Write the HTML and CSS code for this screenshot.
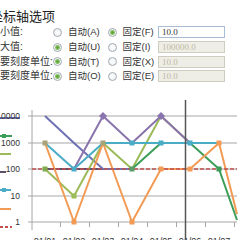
FILE: index.html
```html
<!DOCTYPE html>
<html lang="zh">
<head>
    <meta charset="UTF-8">
    <title>坐标轴选项</title>
    <link rel="stylesheet" href="styles.css">
</head>
<body>

    <div class="panel">
        <h1 class="title">坐标轴选项</h1>

        <div class="rows">
            <span class="lbl">最小值:</span>
            <span class="opt"><span class="radio"></span>自动(A)</span>
            <span class="opt"><span class="radio on"></span>固定(F)</span>
            <span class="field">10.0</span>

            <span class="lbl">最大值:</span>
            <span class="opt"><span class="radio on"></span>自动(U)</span>
            <span class="opt"><span class="radio"></span>固定(I)</span>
            <span class="field off">100000.0</span>

            <span class="lbl">主要刻度单位:</span>
            <span class="opt"><span class="radio on"></span>自动(T)</span>
            <span class="opt"><span class="radio"></span>固定(X)</span>
            <span class="field off">10.0</span>

            <span class="lbl">次要刻度单位:</span>
            <span class="opt"><span class="radio on"></span>自动(O)</span>
            <span class="opt"><span class="radio"></span>固定(E)</span>
            <span class="field off">10.0</span>
        </div>
    </div>

    <svg class="chart" width="251" height="150" viewBox="0 90 251 150">
        <!-- legend, cut off at the left edge -->
        <g class="legend">
            <line x1="0" y1="118" x2="20" y2="118" stroke="#6f72b3"/>
            <line x1="0" y1="136" x2="12" y2="136" stroke="#3b9e58"/>
            <rect x="2" y="134" width="4" height="4" fill="#3b9e58"/>
            <line x1="0" y1="154" x2="11" y2="154" stroke="#9bbb59"/>
            <line x1="0" y1="172" x2="6" y2="172" stroke="#5d4f6e"/>
            <line x1="0" y1="190" x2="11" y2="190" stroke="#4bacc6"/>
            <rect x="2" y="188" width="4" height="4" fill="#4bacc6"/>
            <line x1="0" y1="209" x2="11" y2="209" stroke="#f39b55"/>
            <line x1="0" y1="227" x2="12" y2="227" stroke="#c0504d" stroke-dasharray="3 2"/>
        </g>

        <!-- grid -->
        <g class="grid">
            <line x1="28" y1="116" x2="237" y2="116"/>
            <line x1="28" y1="143" x2="237" y2="143"/>
            <line x1="28" y1="169" x2="237" y2="169"/>
            <line x1="28" y1="196" x2="237" y2="196"/>
            <line x1="28" y1="222" x2="237" y2="222"/>
            <line x1="32" y1="110" x2="32" y2="230"/>
            <line x1="60.5" y1="222" x2="60.5" y2="227"/>
            <line x1="89.5" y1="222" x2="89.5" y2="227"/>
            <line x1="118.5" y1="222" x2="118.5" y2="227"/>
            <line x1="147.5" y1="222" x2="147.5" y2="227"/>
            <line x1="176.5" y1="222" x2="176.5" y2="227"/>
            <line x1="205.5" y1="222" x2="205.5" y2="227"/>
            <line x1="234.5" y1="222" x2="234.5" y2="227"/>
        </g>

        <g class="ylabels">
            <text x="20" y="119">10000</text>
            <text x="20" y="146">1000</text>
            <text x="20" y="172">100</text>
            <text x="20" y="199">10</text>
            <text x="20" y="225">1</text>
        </g>

        <g class="xlabels">
            <text x="45" y="244">01/01</text>
            <text x="74" y="244">01/02</text>
            <text x="103" y="244">01/03</text>
            <text x="132" y="244">01/04</text>
            <text x="161" y="244">01/05</text>
            <text x="190" y="244">01/06</text>
            <text x="219" y="244">01/07</text>
        </g>

        <!-- series -->
        <g class="series">
            <polyline stroke="#5d4f6e" points="45,169 74,169 103,169 132,169"/>
            <polyline stroke="#6f72b3" points="45,116 74,143 103,169 132,169"/>
            <polyline stroke="#9bbb59" points="45,169 74,196 103,143 132,169 161,116 190,143"/>
            <polyline stroke="#8a74ad" points="74,169 103,116 132,143 161,116 190,143"/>
            <polyline stroke="#3b9e58" points="132,169 161,143 190,143 219,169 237,220"/>
            <polyline stroke="#4bacc6" points="45,143 74,169 103,143 132,143 161,143 190,143 219,143"/>
            <polyline stroke="#f39b55" points="45,143 74,222 103,143 132,222 161,169 190,169 219,143 237,214"/>
            <line class="dash" x1="32" y1="169" x2="237" y2="169"/>
        </g>

        <g class="marks">
            <rect x="42.5" y="140.5" width="5" height="5" fill="#a8a27a"/>
            <rect x="42.5" y="166.5" width="5" height="5" fill="#7fab4d"/>
            <rect x="71.5" y="166.5" width="5" height="5" fill="#4bacc6"/>
            <rect x="71.5" y="193.5" width="5" height="5" fill="#9bbb59"/>
            <rect x="71.5" y="219.5" width="5" height="5" fill="#f39b55"/>
            <rect x="100.5" y="140.5" width="5" height="5" fill="#a8a27a"/>
            <rect x="129.5" y="140.5" width="5" height="5" fill="#4bacc6"/>
            <rect x="129.5" y="166.5" width="5" height="5" fill="#5b9e6a"/>
            <rect x="129.5" y="219.5" width="5" height="5" fill="#f39b55"/>
            <rect x="158.5" y="140.5" width="5" height="5" fill="#4bacc6"/>
            <rect x="158.5" y="166.5" width="5" height="5" fill="#f39b55"/>
            <rect x="187.5" y="140.5" width="5" height="5" fill="#4bacc6"/>
            <rect x="187.5" y="166.5" width="5" height="5" fill="#f39b55"/>
            <rect x="216.5" y="140.5" width="5" height="5" fill="#f39b55"/>
            <rect x="216.5" y="166.5" width="5" height="5" fill="#3b9e58"/>
            <polygon points="103,112 107,116 103,120 99,116" fill="#8a74ad"/>
            <polygon points="161,112 165,116 161,120 157,116" fill="#8a74ad"/>
        </g>

        <line class="cursor" x1="185.5" y1="100" x2="185.5" y2="240"/>
    </svg>

</body>
</html>
```

FILE: styles.css
```css
body {
    margin: 0;
    width: 251px;
    height: 240px;
    overflow: hidden;
    background: #fff;
    color: #333;
    font-family: "Liberation Sans", "Noto Sans CJK SC", sans-serif;
    text-autospace: no-autospace;
}

.panel {
    margin-left: -10px;
    height: 90px;
}

.title {
    margin: 0;
    padding-top: 9px;
    font-size: 13px;
    line-height: 15px;
    font-weight: normal;
    color: #222;
}

.rows {
    display: grid;
    grid-template-columns: 63px 54.5px 50.5px 67px;
    grid-auto-rows: 14.7px;
    align-items: center;
    margin-top: 1px;
    font-size: 10px;
    line-height: 12px;
}

.lbl {
    white-space: nowrap;
}

.opt {
    display: flex;
    align-items: center;
    gap: 6px;
    white-space: nowrap;
    font-size: 9.5px;
}

.radio {
    flex-shrink: 0;
    width: 9px;
    height: 9px;
    box-sizing: border-box;
    border: 1px solid #a3abb4;
    border-radius: 50%;
    background: radial-gradient(circle, #fff 0, #e9ebee 100%);
}

.radio.on {
    background: radial-gradient(circle, #4f9d2f 0, #8cc06a 2px, #f4f6f2 3px);
}

.field {
    height: 12px;
    box-sizing: border-box;
    border: 1px solid #a9bed6;
    background: #fff;
    padding-left: 3px;
    font-family: "Liberation Serif", serif;
    font-size: 9px;
    line-height: 10px;
    color: #333;
}

.field.off {
    background: #efeee6;
    border-color: #cfcdbf;
    color: #bdb9a4;
}

.chart {
    display: block;
}

.legend line {
    stroke-width: 2;
}

.grid line {
    stroke: #a6a6a6;
    stroke-width: 1;
}

.ylabels text {
    font-family: "Liberation Sans", sans-serif;
    font-size: 8.5px;
    fill: #333;
    text-anchor: end;
}

.xlabels text {
    font-family: "Liberation Sans", sans-serif;
    font-size: 9px;
    fill: #333;
    text-anchor: middle;
}

.series polyline {
    fill: none;
    stroke-width: 2;
    stroke-linejoin: round;
}

.dash {
    stroke: #c0504d;
    stroke-width: 1.5;
    stroke-dasharray: 4 2;
}

.cursor {
    stroke: #555;
    stroke-width: 1.5;
}
```
